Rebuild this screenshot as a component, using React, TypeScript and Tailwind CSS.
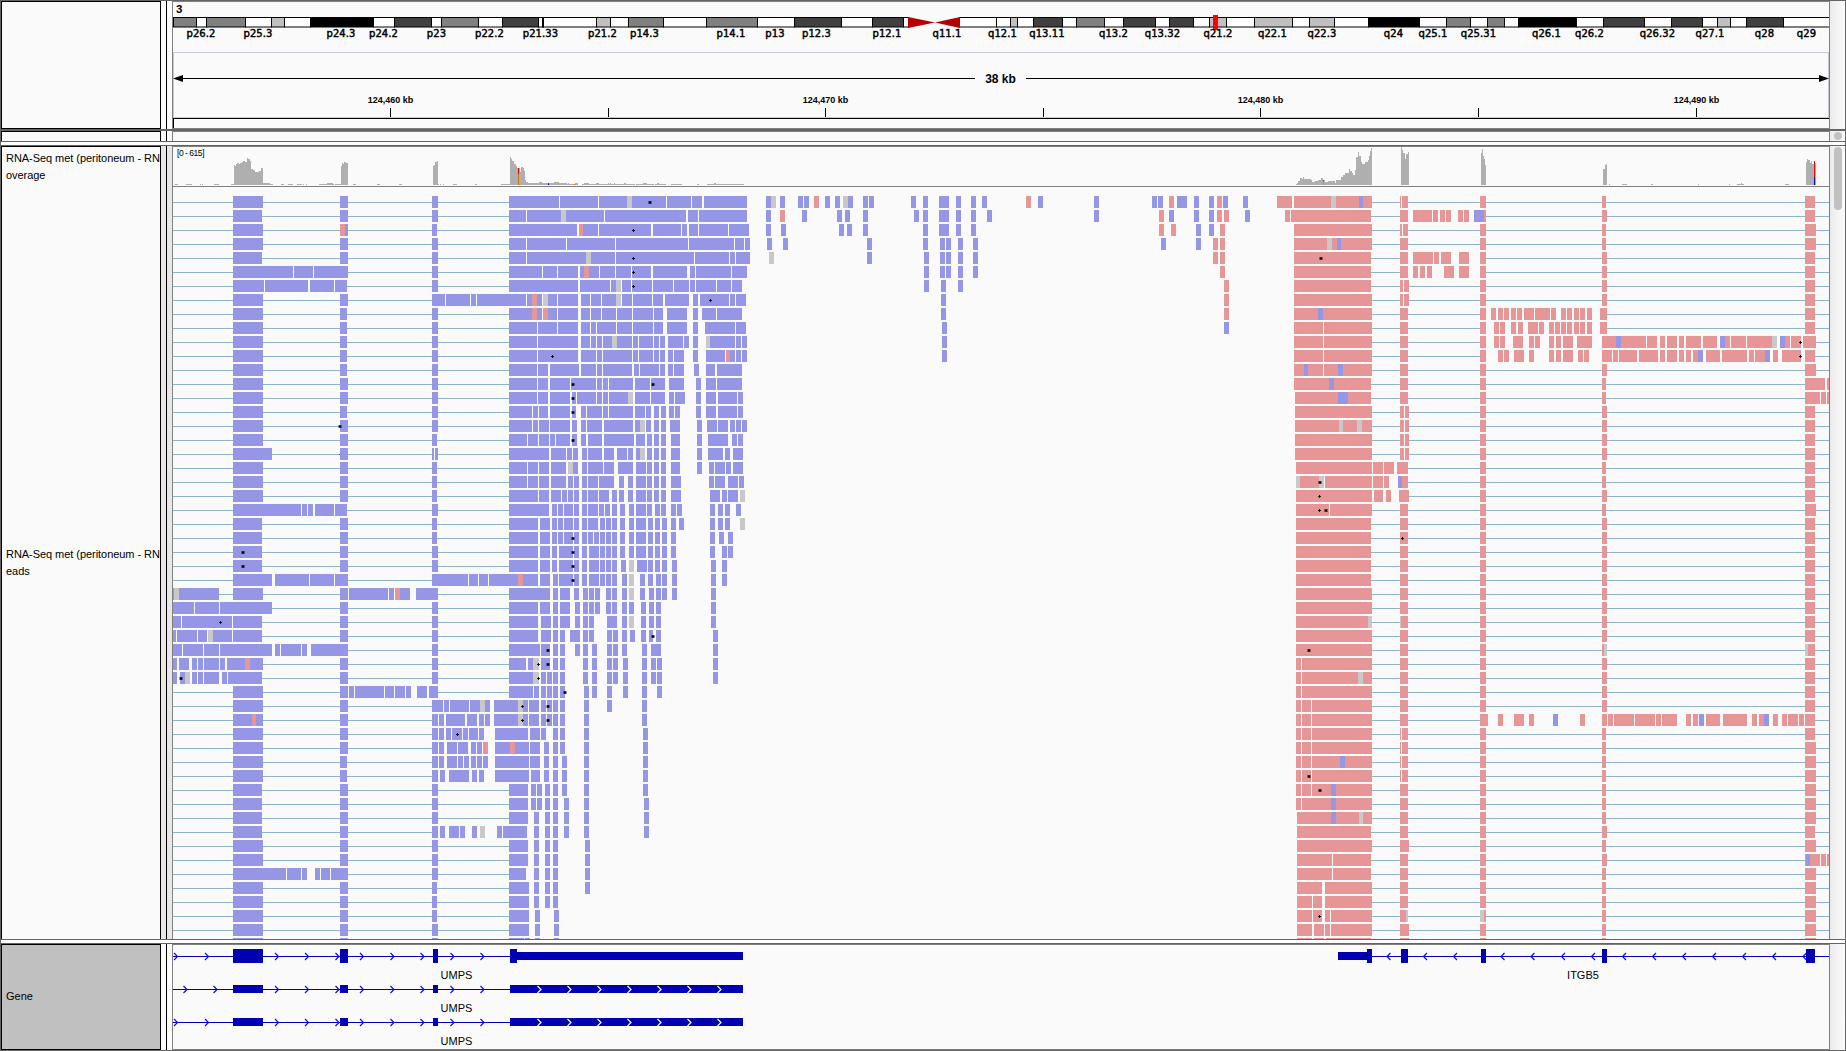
import React from "react";

const BLUE = "#9696e6";
const RED = "#e69696";
const GREY = "#c8c8c8";
const NAVY = "#0000b2";
const SANS = '"Liberation Sans", Arial, sans-serif';

/* ---------- Ideogram ---------- */

const W = "#ffffff";
const L = "#c0c0c0";
const M = "#808080";
const D = "#404040";
const K = "#000000";

const bands: [number, string][] = [
  [173, M], [196, W], [206, M], [245, W], [271, L], [284, W], [310, K], [373, W], [394, D], [431, W],
  [441, M], [478, W], [502, D], [538, W], [542, K], [543, W], [596, L], [610, W], [628, M], [663, W],
  [706, M], [757, W], [794, D], [841, W], [872, D], [903, W], [908, "none"], [959, W], [996, W],
  [1010, L], [1017, W], [1033, D], [1062, W], [1076, M], [1104, W], [1123, D], [1155, W], [1169, D],
  [1193, W], [1209, L], [1226, W], [1254, L], [1292, W], [1309, L], [1334, W], [1368, K], [1419, W],
  [1446, M], [1470, W], [1487, M], [1504, W], [1518, K], [1576, W], [1603, D], [1644, W], [1671, D],
  [1702, W], [1717, L], [1730, W], [1746, D], [1783, W], [1830, "none"],
];

const bandLabels: [string, number][] = [
  ["p26.2", 201], ["p25.3", 258], ["p24.3", 341], ["p24.2", 383.5], ["p23", 436.5], ["p22.2", 489.5],
  ["p21.33", 540.5], ["p21.2", 602.5], ["p14.3", 644.5], ["p14.1", 731], ["p13", 775], ["p12.3", 816.5],
  ["p12.1", 887], ["q11.1", 947], ["q12.1", 1002.5], ["q13.11", 1047], ["q13.2", 1113.5],
  ["q13.32", 1162.5], ["q21.2", 1218], ["q22.1", 1272.5], ["q22.3", 1322], ["q24", 1393.5],
  ["q25.1", 1433], ["q25.31", 1478.5], ["q26.1", 1546.5], ["q26.2", 1589.5], ["q26.32", 1657.5],
  ["q27.1", 1710], ["q28", 1764.5], ["q29", 1806.5],
];

function Ideogram() {
  return (
    <svg width={1656} height={50} viewBox="173 2 1656 50" className="block">
      <text x={176} y={13} fontFamily={SANS} fontSize={11.5} fontWeight={700}>3</text>
      {bands.slice(0, -1).map(([x, c], i) =>
        c === "none" ? null : (
          <rect key={x} x={x + 0.5} y={17.5} width={bands[i + 1][0] - x} height={9.5} fill={c} stroke="#000" />
        ),
      )}
      <path d="M908 17 L935 22.5 L908 28Z M960 17 L935 22.5 L960 28Z" fill="#b40000" />
      <rect x={1213} y={15} width={5} height={15} fill="#ff0000" />
      {bandLabels.map(([t, x]) => (
        <text key={t} x={x} y={36.5} textAnchor="middle" fontFamily='"DejaVu Sans", Verdana, sans-serif' fontSize={10} letterSpacing={0.1} stroke="#000" strokeWidth={0.45}>
          {t}
        </text>
      ))}
    </svg>
  );
}

/* ---------- Ruler ---------- */

const ticks: [number, string][] = [
  [390, "124,460 kb"], [608, ""], [825, "124,470 kb"], [1043, ""], [1260, "124,480 kb"], [1478, ""], [1696, "124,490 kb"],
];

function Ruler() {
  return (
    <svg width={1656} height={66} viewBox="173 52 1656 66" className="block">
      <path d="M173.5 118V52.5H1828.5V118M173 117.5H1829" fill="none" stroke="#c8c8d6" />
      <path d="M175 78.5H975M1026 78.5H1827" stroke="#000" />
      <path d="M173 78.5L183 75V82ZM1829 78.5L1819 75V82Z" />
      <text x={1000.5} y={83} textAnchor="middle" fontFamily={SANS} fontSize={12} fontWeight={700}>38 kb</text>
      {ticks.map(([x, t]) => (
        <g key={x}>
          <path d={`M${x + 0.5} 108V117`} stroke="#000" />
          <text x={x + 0.5} y={103} textAnchor="middle" fontFamily={SANS} fontSize={9} fontWeight={700}>{t}</text>
        </g>
      ))}
    </svg>
  );
}

/* ---------- Coverage ---------- */

interface Profile {
  origin: number;
  scale: number;
  steps: string;
}

/* Each entry is "start:top,start:top,...,end"; tops are in thirds of a pixel. */
const profiles: Profile[] = [
  {
    origin: 0,
    scale: 2.529,
    steps: `443:552,450 470:552,486 506:552,508 511:552,513 540:552,554 584:552,592
592:496,595:499,598:493,600:490,604:493,608:490,611:487,614:484,620:487,625:474,628:477,632:484,635:507,641:510,645:516,655:512,660:504,665:549,683:552,690
711:552,718 728:552,741 752:552,763 767:552,769 773:552,776 807:552,827:549,841:552,845 848:552,862
862:498,865:489,868:493,870:486,874:489,880 893:552,900 953:552,961 1009:552,1017
1095:498,1098:495,1101:486,1104:484,1108 1107:552,1110 1113:552,1115 1120:552,1123 1146:552,1156 1201:552,1206 1267:552,1290
1290:471,1292:477,1296:483,1300:492,1304:497,1308:503,1314:516,1318:501,1322:505,1325:513,1328:540,1331:545,1335:549,1362:546,1370:549,1390:552,1392:549,1401:546,1414:549,1428:552,1430:549,1433:552,1436:549,1439:552,1446:552,1455:549,1461:552,1463
1472:552,1478:549,1490:552,1508:549,1514:552,1568`,
  },
  {
    origin: 600,
    scale: 2.529,
    steps: "0:552,20:549,23:552,26:549,28:552,36:549,39:552,46 48:552,61:549,66:552,89 91:552,109:549,119:552,137 139:552,144:549,149:552,167 180:552,207 245:552,250 271:552,288:549,293:552,364",
  },
  {
    origin: 1220,
    scale: 2.505,
    steps: `190:552,193:548,196:543,200:535,206:537,208:531,211:536,220:537,228:540,230:545,237:543,245:541,252:534,258:541,262:546,270:543,282:544,288:549,291:541,297:540,303:532,307:525,312:520,317:518,322:508,326:513,330:520,334:525,337:510,341:471,346:456,349:467,352:486,356:491,362:486,367:486,371:480,374:467,377:453,379:444,381
453:441,455:450,459:460,463:477,466:463,471:456,473 654:460,656:447,658:468,661:477,664:495,666 959:507,964:495,967:491,969
975:552,977 1007:552,1019 1080:552,1085 1197:552,1200 1275:552,1277 1295:552,1304:549,1308:552,1313 1415:552,1425
1468:487,1470:476,1474:479,1477:489,1481:484,1484:491,1487:484,1490:488,1493`,
  },
];

const areaPath = ({ origin, scale, steps }: Profile) =>
  steps
    .split(/\s+/)
    .map((run) => {
      const parts = run.split(",").map((p) => p.split(":").map(Number));
      const px = (v: number) => Math.round(origin + v / scale);
      let d = `M${px(parts[0][0])} 185`;
      for (let i = 0; i < parts.length - 1; i++) {
        d += `V${Math.round(parts[i][1] / 3)}H${px(parts[i + 1][0])}`;
      }
      return d + "V185Z";
    })
    .join("");

const variants: [number, number, number, string][] = [
  [518, 168, 6, "#ff0000"], [518, 174, 11, "#d17105"], [548, 183, 1, "#ff0000"], [548, 184, 1, "#0000ff"],
  [574, 184, 1, "#d17105"], [1323, 180, 1, "#ff0000"], [1323, 181, 4, "#00ff00"],
  [1814, 161, 16, "#ff0000"], [1814, 177, 8, "#0000ff"],
];

function Coverage() {
  return (
    <svg width={1656} height={40} viewBox="173 147 1656 40" className="block" shapeRendering="crispEdges">
      {profiles.map((p) => (
        <path key={p.origin} d={areaPath(p)} fill="#afafaf" />
      ))}
      {variants.map(([x, y, h, c], i) => (
        <rect key={i} x={x} y={y} width={1} height={h} fill={c} />
      ))}
      <rect x={173} y={186} width={1656} height={1} fill="#808080" />
      <text x={177} y={156} fontFamily={SANS} fontSize={8.5} textLength={27.5}>[0 - 615]</text>
    </svg>
  );
}

/* ---------- Reads ---------- */

/*
 * A row is a list of blocks "start-end" in region units, optionally prefixed by
 * b / r / g for a colour of its own. "*x" marks an insertion, "+x" a small one,
 * "~x" one that is mostly hidden behind the block beside it.
 */
const ex = (a: number, b: number, c: number) => `219-${a} 540-${b} 816-${c}`;
const rt = (c = 917, d = 1484, b = "354-376") => `${b} 572-588 904-${c} 1456-${d}`;
const split = "354-365 367-378";
const thin = "354-357 359-376";

const leftRows: string[] = [
  ex(309, 564, 834),
  ex(306, 564, 834),
  ex(309, 564, 831) + " r540-555",
  ex(309, 564, 834),
  ex(306, 564, 834),
  "219-399 402-459 462-564 816-834",
  "219-312 315-444 450-522 525-561 816-834",
  "219-309 540-564 816-855 858-930 933-948 951-1020",
  ex(309, 561, 834),
  ex(309, 561, 834),
  ex(309, 561, 834),
  ex(309, 561, 834),
  ex(309, 561, 834),
  ex(309, 564, 834),
  ex(309, 564, 834),
  ex(309, 561, 834),
  ex(309, 564, 834) + " *541",
  ex(309, 564, 831),
  "219-336 540-564 816-822 825-834 ~538",
  ex(309, 564, 831),
  ex(309, 564, 831),
  ex(309, 564, 831),
  "219-423 426-441 444-459 465-522 525-561 816-834",
  ex(306, 564, 831),
  ex(306, 564, 831),
  ex(306, 564, 834) + " *249",
  ex(306, 564, 834) + " *249",
  "219-336 345-447 450-522 525-564 816-924 927-954 957-984 987-1020",
  "39-177 g42-57 219-309 540-564 567-684 687-702 705-750 r705-720 768-834",
  "39-102 105-177 180-336 540-564 816-834",
  "39-63 66-216 219-306 540-564 816-834 +181",
  "39-48 51-111 114-141 g144-159 159-216 219-306 540-564 816-834",
  "39-66 69-129 132-177 180-336 345-360 363-423 426-441 453-564 816-834",
  "39-51 57-87 96-111 114-129 132-177 180-195 201-309 r255-270 540-564 816-834",
  "39-51 60-75 g75-90 96-111 114-129 132-177 186-201 204-306 540-564 816-834 *63",
  "219-309 540-564 567-582 585-672 675-702 705-735 738-753 771-801 807-834",
  "219-309 540-564 816-849 852-867 870-927 930-960 g960-975 975-990",
  "219-309 r276-288 540-564 816-834 837-852 858-915 921-951 957-972 975-990",
  "219-309 540-564 816-834 837-852 858-873 876-906 909-924 927-954 957-972 +892",
  "219-309 540-564 816-834 837-852 861-891 894-924 933-948 951-966 r969-984",
  "219-309 540-561 816-834 837-852 861-891 894-909 912-927 933-948 951-966 969-984",
  "219-309 540-561 816-834 840-855 867-927 936-951 957-972",
  ex(306, 564, 834),
  ex(306, 564, 834),
  ex(306, 564, 834),
  "219-306 540-564 816-834 840-855 867-897 900-915 936-951 g960-975",
  ex(309, 564, 834),
  ex(309, 564, 834),
  "219-378 381-423 426-441 465-480 483-510 513-564 816-834",
  ex(309, 564, 831),
  ex(309, 564, 831),
  ex(309, 564, 831),
  ex(309, 564, 834),
  ex(309, 564, 834),
];

const pileRows: string[] = [
  "57-207 210-324 327-528 g411-426 531-603 606-636 642-771 *479",
  "57-108 111-342 g213-228 345-588 594-624 627-771",
  "57-261 267-324 r267-279 327-483 489-573 576-591 597-624 627-714 717-777 +430",
  "57-108 111-228 231-375 378-594 597-732 735-762 765-780",
  "57-108 111-375 g288-303 378-612 615-717 720-735 738-780 +430",
  "57-156 159-201 204-264 270-327 r282-297 330-375 378-423 426-483 489-591 600-615 618-723 726-771 +430",
  "57-264 270-360 363-393 g378-393 396-423 426-486 489-549 552-597 600-615 618-678 681-723 726-756 +430",
  "0-108 111-126 r126-141 141-156 g159-174 174-201 204-264 273-300 303-333 336-393 g378-393 396-426 429-486 489-519 525-597 609-624 630-717 720-735 738-768 +661",
  "57-126 r126-141 141-156 r159-174 174-201 204-264 273-300 303-333 336-378 381-426 429-489 492-519 531-591 609-624 636-678 681-756",
  "57-141 144-201 204-264 273-300 303-318 321-378 381-426 429-489 492-519 531-591 609-624 645-735 738-768",
  "57-141 144-264 273-300 303-318 321-336 339-426 g366-381 429-444 447-489 492-507 510-525 534-579 582-597 609-624 g648-660 660-735 738-753 756-771",
  "57-141 144-264 273-318 321-336 339-426 429-444 447-489 492-507 510-525 534-549 552-582 609-624 648-705 r708-720 720-735 738-753 756-771 +187",
  "57-141 144-174 180-267 273-318 321-336 339-426 432-447 450-507 510-525 534-549 552-582 612-627 648-675 681-756",
  "57-141 144-174 180-240 243-318 321-336 339-354 357-429 435-480 483-525 537-582 618-633 648-678 681-756 *249 *489",
  "57-141 144-174 180-240 246-258 261-318 321-336 339-354 357-414 g414-429 435-480 483-525 537-552 555-585 618-633 648-678 684-741 744-759 *249",
  "57-126 129-144 147-174 180-240 246-258 273-288 291-336 339-354 357-429 435-465 468-483 492-507 513-528 537-552 555-570 618-633 648-678 684-741 744-759 *249",
  "57-126 129-144 147-177 180-240 246-261 273-288 291-336 342-429 435-450 g450-465 468-483 492-507 513-528 540-570 621-636 651-681 684-714 720-735 738-753 756-771",
  "57-111 114-144 147-177 180-195 198-240 246-261 273-288 294-336 342-432 438-465 471-486 492-507 513-528 543-570 621-636 654-714 726-741 744-759 *249",
  "57-177 183-228 231-246 249-264 276-291 294-336 342-372 381-411 414-429 438-450 g450-465 471-486 492-507 513-528 543-570 621-636 654-699 705-720 729-759",
  "57-111 114-144 147-177 183-228 g234-249 249-264 276-291 294-339 342-372 384-429 438-468 471-486 492-507 513-528 543-570 621-636 657-672 675-705 708-723 729-759",
  "57-111 114-144 147-177 183-228 234-249 252-267 276-291 294-324 327-372 387-402 414-429 438-468 471-486 492-507 513-528 543-573 657-672 675-705 714-744 747-762",
  "57-144 147-177 183-213 216-231 234-249 252-267 276-291 294-324 327-357 366-381 387-402 414-429 438-468 471-486 492-507 513-528 543-573 660-690 696-711 714-744 g750-765",
  "57-177 186-201 204-219 222-249 252-267 276-291 294-324 327-342 345-360 366-381 390-405 417-432 438-468 471-486 495-510 513-528 543-558 561-576 660-675 684-699 705-720 738-753",
  "57-144 150-180 186-201 204-219 222-249 252-267 276-291 294-324 330-345 348-363 366-381 390-405 417-432 438-468 474-489 495-510 516-531 543-558 567-582 660-675 684-699 705-720 g750-765",
  "57-144 150-180 186-201 204-219 222-249 252-267 276-291 294-309 312-327 330-345 348-363 366-381 390-405 417-432 438-468 474-489 495-510 516-531 543-558 660-675 687-702 714-729 *248",
  "57-144 150-180 186-201 207-249 252-267 276-291 297-327 330-345 348-363 366-381 390-405 417-432 438-468 474-489 495-510 516-531 543-558 660-675 696-711 714-729 *248",
  "57-144 150-180 186-201 207-249 252-267 276-291 297-327 330-345 348-363 366-381 393-408 g417-432 441-471 474-489 495-510 516-531 546-561 663-678 696-711 *248",
  "0-144 r84-99 150-180 189-204 207-249 252-267 276-291 297-327 330-345 348-363 366-381 396-411 g417-432 450-465 474-489 498-513 516-531 546-561 663-678 696-711 *248",
  "57-180 189-204 210-240 252-267 279-294 297-312 315-330 348-363 366-381 396-411 g417-432 450-465 477-492 498-513 516-531 546-561 663-678",
  "57-144 150-180 189-204 210-240 255-270 279-294 297-312 315-330 348-363 366-381 396-411 417-432 453-468 477-492 498-513 663-678",
  "57-144 153-183 189-204 210-240 255-270 279-294 297-312 351-381 396-411 g417-432 453-468 477-492 498-513 663-678",
  "57-144 153-183 189-204 210-225 240-270 279-294 297-312 351-366 369-384 396-411 420-435 453-468 477-489 498-513 669-684 *489",
  "57-150 153-180 189-204 210-225 255-270 279-294 306-321 351-366 369-384 396-411 456-471 483-513 669-684 *174",
  "57-108 114-129 g129-147 153-180 189-204 210-225 279-294 306-321 351-366 369-384 399-414 456-471 483-498 501-516 669-684 +145 *174",
  "57-129 g129-147 153-168 171-186 189-204 210-225 279-294 306-321 351-366 369-384 399-414 456-471 483-498 501-516 669-684 +145",
  "57-129 132-147 153-168 171-186 189-204 210-225 282-297 306-321 351-366 399-414 456-471 501-516 *225",
  "12-114 g84-99 117-147 153-168 171-186 189-204 210-225 282-297 351-366 456-471 +97 *174",
  "12-114 g84-99 117-147 153-168 171-186 189-204 210-225 282-297 456-471 +97 *174",
  "15-114 120-150 153-168 189-204 210-225 282-297 459-474",
  "15-117 r60-75 120-150 162-177 189-204 210-225 282-297 459-474",
  "15-117 120-150 162-177 189-204 216-231 282-297 459-474",
  "15-117 123-150 162-177 189-204 216-231 282-297 459-474",
  "57-114 123-138 141-156 165-180 189-204 216-231 282-297 459-474",
  "57-114 123-138 141-156 165-180 189-204 222-237 282-297 462-477",
  "57-114 132-147 165-180 189-204 222-237 282-297 462-477",
  "21-36 39-111 132-147 165-180 189-204 222-237 282-297 462-477",
  "57-114 132-147 165-180 189-204 285-300",
  "57-114 132-147 165-180 189-204 285-300",
  "57-108 132-147 165-180 189-204 285-300",
  "57-117 132-147 165-180 189-204 285-300",
  "57-117 132-147 165-180 189-204",
  "57-117 135-150 192-207",
  "57-117 135-150 192-207",
  "57-102 105-120 135-150 192-207",
];

const middleRows: string[] = [
  "47-62 g62-77 89-104 142-157 160-175 r189-204 222-237 251-266 g275-290 290-305 334-349 352-367 476-491 512-527 559-589 609-624 654-669 686-701 r817-831 852-867 1018-1033 1189-1204 1207-1222 r1240-1254 1263-1293 1314-1328 1358-1373 r1382-1396 1399-1414 1459-1473",
  "47-62 r89-104 154-169 257-272 281-296 334-349 485-500 512-527 559-589 609-624 654-669 701-716 1018-1033 r1210-1225 1240-1254 1314-1328 1358-1373 r1382-1396 r1402-1417 1464-1479",
  "47-62 92-107 263-278 287-302 334-349 512-527 559-589 609-624 654-669 r1210-1225 r1246-1260 1319-1334 1358-1373 r1390-1405",
  "50-65 98-112 346-361 512-527 562-577 580-595 615-630 660-675 1216-1231 1319-1334 r1370-1385 r1390-1405",
  "g56-71 346-361 515-530 562-577 580-595 615-630 660-675 r1370-1385 r1390-1405",
  "515-530 562-577 580-595 615-630 660-675 r1390-1405",
  "515-530 565-580 615-630 r1402-1417",
  "565-580 r1402-1417",
  "565-580 r1402-1417",
  "568-583 1402-1417",
  "568-583",
  "568-583",
];

const rightRows: string[] = [
  "19-60 65-278 g166-180 b242-253 " + rt(915, 1484, thin),
  "41-54 57-275 354-376 389-441 444-457 463-476 479-493 512-525 528-542 b555-583 583-588 904-917 1456-1484",
  "65-278 " + rt(915, 1486, "354-359 362-376"),
  "65-278 g155-169 b182-193 " + rt(915, 1486),
  "65-275 354-376 389-444 446-460 465-493 514-542 572-588 904-917 1456-1484 *138",
  "65-275 354-376 389-403 408-422 427-441 474-501 514-542 572-588 904-917 1456-1484",
  "65-275 " + rt(917, 1484, "354-362 365-378"),
  "65-278 " + rt(917, 1484, "354-362 365-378"),
  "65-278 b131-144 354-376 572-588 602-615 621-634 637-651 656-670 672-686 691-719 721-762 765-779 792-806 808-822 828-841 844-857 863-877 898-917 1456-1484",
  "65-144 147-278 354-376 572-588 610-623 626-640 656-670 675-689 702-730 732-746 759-773 776-789 792-806 808-822 828-841 844-857 863-877 898-917 1456-1484",
  "65-144 147-278 354-376 572-588 610-623 626-640 661-689 705-719 721-735 759-773 779-792 798-825 836-877 904-1024 b942-955 1026-1053 1062-1075 1081-1108 1113-1127 1132-1173 1179-1217 b1225-1239 1239-1252 1255-1296 1298-1380 g1367-1380 b1388-1402 1402-1416 1418-1445 1451-1486 +1444",
  "65-144 147-278 354-376 572-588 621-634 637-651 664-691 705-719 759-773 779-792 798-825 838-852 855-868 904-931 934-947 950-999 1004-1056 1062-1075 1081-1108 1113-1127 1132-1146 1151-1165 b1165-1179 1187-1225 1230-1298 1304-1318 1320-1347 b1347-1361 1369-1383 1394-1445 1456-1484 +1444",
  "65-144 147-278 b93-103 b185-199 " + rt(917, 1486),
  "65-275 b161-174 354-376 572-588 904-915 1456-1511 1516-1523",
  "68-275 b185-212 354-376 572-588 904-915 1456-1497 1500-1514 1516-1523",
  "68-278 " + rt(917, 1484, split),
  "68-278 g188-199 g237-250 " + rt(917, 1484, split),
  "68-278 " + rt(917, 1484, split),
  "68-278 " + rt(917, 1484, split),
  "71-278 280-308 310-338 346-376 572-588 904-915 1456-1484",
  "71-147 g71-82 g133-147 150-278 280-308 310-324 b348-359 359-376 572-588 904-915 1456-1484 *136",
  "71-278 283-308 316-329 351-378 572-588 904-917 1456-1484 +134",
  "71-161 163-278 " + rt(915, 1486) + " +134 *152",
  "71-275 " + rt(),
  "71-275 " + rt() + " +361",
  "71-275 " + rt(),
  "71-275 " + rt(),
  "71-275 " + rt(),
  "71-278 " + rt(),
  "71-278 " + rt(),
  "71-278 g267-278 " + rt() + " g354-357",
  "71-278 " + rt(),
  "71-278 " + rt() + " g909-917 g1456-1465 *106",
  "71-84 87-278 " + rt(),
  "71-84 87-278 g240-253 " + rt(),
  "71-84 87-278 " + rt(),
  "71-84 87-112 114-278 " + rt(),
  "71-84 87-112 114-278 354-376 572-593 621-634 664-691 705-719 b770-784 844-857 904-917 920-934 936-991 994-1048 1051-1064 1067-1108 1132-1146 1151-1165 b1168-1181 1187-1225 1233-1298 1312-1326 1331-1345 b1345-1358 1369-1383 1394-1407 1410-1437 1440-1454 1456-1484",
  "71-84 87-112 114-278 " + rt(915, 1484, thin),
  "71-84 87-112 114-278 " + rt(915, 1486, thin),
  "71-84 87-112 114-278 b191-204 " + rt(915, 1486, thin),
  "71-84 87-112 114-278 " + rt(915, 1486, thin) + " *106",
  "71-84 87-112 114-278 b166-180 " + rt(915, 1486) + " *135",
  "71-84 87-278 b166-180 " + rt(915, 1486),
  "73-278 b166-180 g242-253 " + rt(915, 1486),
  "73-275 " + rt(),
  "73-278 " + rt(915, 1486, "354-378"),
  "73-169 171-275 354-376 572-588 904-917 1456-1497 b1459-1470 1500-1514 1516-1523",
  "73-169 171-275 " + rt(915, 1486),
  "73-142 150-278 " + rt(915, 1486),
  "73-114 117-142 150-278 " + rt(915, 1486),
  "73-114 117-142 150-163 166-278 " + rt(915, 1486) + " g370-376 g572-583 +135",
  "73-114 120-147 150-163 166-278 " + rt(915, 1486, "354-378"),
  "73-114 120-147 152-275 " + rt(915, 1486, "354-378"),
];

interface Region {
  origin: number;
  scale: number;
  fill: string;
  rows: string[];
  minGap?: number;
  from?: number;
  to?: number;
  tailBefore?: number;
}

const regions: Region[] = [
  { origin: 160, scale: 3, fill: BLUE, rows: leftRows, minGap: 40, from: 39, to: 1047, tailBefore: 840 },
  { origin: 490, scale: 3, fill: BLUE, rows: pileRows },
  { origin: 750, scale: 2.9585, fill: BLUE, rows: middleRows },
  { origin: 1270, scale: 2.7222, fill: RED, rows: rightRows, minGap: 70, to: 1523, tailBefore: 1490 },
];

const tint: Record<string, string> = { b: BLUE, r: RED, g: GREY };

function Mark({ x, y, kind }: { x: number; y: number; kind: string }) {
  if (kind === "~") {
    return <rect x={Math.round(x - 0.5)} y={y + 6} width={1} height={1} fill="#000" opacity={0.5} />;
  }
  if (kind === "+") {
    return (
      <g>
        <rect x={Math.round(x - 1.5)} y={y + 6} width={3} height={1} fill="#000" opacity={0.85} />
        <rect x={Math.round(x - 0.5)} y={y + 5} width={1} height={3} fill="#000" opacity={0.85} />
      </g>
    );
  }
  return (
    <g>
      <rect x={Math.round(x - 2)} y={y + 5} width={4} height={3} fill="#000" opacity={0.4} />
      <rect x={Math.round(x - 1)} y={y + 5} width={2} height={3} fill="#000" opacity={0.6} />
      <rect x={Math.round(x - 1)} y={y + 6} width={2} height={1} fill="#000" />
    </g>
  );
}

function ReadRow({ region, row, index }: { region: Region; row: string; index: number }) {
  const y = 196 + index * 14;
  const px = (v: number) => Math.round(region.origin + v / region.scale);
  const blocks: [number, number, string][] = [];
  const marks: [number, string][] = [];
  row.split(" ").forEach((tok) => {
    const head = tok[0];
    if (head === "*" || head === "+" || head === "~") {
      marks.push([region.origin + Number(tok.slice(1)) / region.scale, head]);
      return;
    }
    const own = tint[head];
    const [a, b] = (own ? tok.slice(1) : tok).split("-").map(Number);
    blocks.push([a, b, own ?? region.fill]);
  });

  const links: [number, number][] = [];
  if (region.minGap) {
    let end = region.from ?? Infinity;
    [...blocks].sort((p, q) => p[0] - q[0]).forEach(([a, b]) => {
      if (a - end >= region.minGap!) links.push([end, a]);
      end = end === Infinity ? b : Math.max(end, b);
    });
    if (end < region.tailBefore!) links.push([end, region.to!]);
  }

  return (
    <g>
      {links.map(([a, b]) => (
        <rect key={`l${a}`} x={px(a)} y={y + 6} width={px(b) - px(a)} height={1} fill="#91b5c8" />
      ))}
      {blocks.map(([a, b, c], i) => (
        <rect key={i} x={px(a)} y={y} width={Math.max(1, px(b) - px(a))} height={12} fill={c} />
      ))}
      {marks.map(([x, kind], i) => (
        <Mark key={`m${i}`} x={x} y={y} kind={kind} />
      ))}
    </g>
  );
}

function Reads() {
  return (
    <svg width={1656} height={752} viewBox="173 187 1656 752" className="block" shapeRendering="crispEdges">
      {regions.map((region) => (
        <g key={region.origin}>
          {region.rows.map((row, i) => (
            <ReadRow key={i} region={region} row={row} index={i} />
          ))}
        </g>
      ))}
    </svg>
  );
}

/* ---------- Genes ---------- */

const chevrons = (tips: number[], y: number, dir: 1 | -1) =>
  tips.map((x) => `M${x - 3.5 * dir} ${y - 3.5}L${x} ${y}L${x - 3.5 * dir} ${y + 3.5}`).join("");

const sharedTips = [278.5, 308.5, 339, 363.5, 394, 424, 454, 484];
const utrTips = [541, 571, 601, 631, 661, 691, 721];
const itgb5Tips = [1387, 1423.5, 1453.5, 1501, 1531, 1561.5, 1591.5, 1622.5, 1652.5, 1682.5, 1712.5, 1742.5, 1772.5, 1803];

const transcripts: { y: number; tips: number[]; coding: boolean }[] = [
  { y: 956, tips: [177.5, 208.5, ...sharedTips], coding: true },
  { y: 989, tips: [187, 217, ...sharedTips], coding: false },
  { y: 1022, tips: [177.5, 208.5, ...sharedTips], coding: false },
];

function Genes() {
  return (
    <svg width={1656} height={104} viewBox="173 945 1656 104" className="block">
      {transcripts.map(({ y, tips, coding }) => {
        const top = coding ? y - 7 : y - 4;
        const h = coding ? 14 : 8;
        return (
          <g key={y} fill={NAVY}>
            <rect x={173} y={y} width={337} height={1} />
            <path d={chevrons(tips, y + 0.5, 1)} fill="none" stroke="#0a0af5" strokeWidth={1.2} />
            <rect x={233} y={top} width={30} height={h} />
            <rect x={340} y={top} width={8} height={h} />
            <rect x={433} y={top} width={5} height={h} />
            {coding && <rect x={510} y={top} width={7} height={h} />}
            <rect x={510} y={y - 4} width={233} height={8} />
            {!coding && <path d={chevrons(utrTips, y + 0.5, 1)} fill="none" stroke="#fff" strokeWidth={1.2} />}
            <text x={456.5} y={y + 23} textAnchor="middle" fill="#000" fontFamily={SANS} fontSize={11}>UMPS</text>
          </g>
        );
      })}
      <g fill={NAVY}>
        <rect x={1372} y={956} width={457} height={1} />
        <path d={chevrons(itgb5Tips, 956.5, -1)} fill="none" stroke="#0a0af5" strokeWidth={1.2} />
        <rect x={1338} y={952} width={30} height={8} />
        <rect x={1367} y={949} width={5} height={14} />
        <rect x={1401} y={949} width={7} height={14} />
        <rect x={1481} y={949} width={5} height={14} />
        <rect x={1602} y={949} width={5} height={14} />
        <rect x={1806} y={949} width={9} height={14} />
        <text x={1583} y={979} textAnchor="middle" fill="#000" fontFamily={SANS} fontSize={11}>ITGB5</text>
      </g>
    </svg>
  );
}

/* ---------- Frame ---------- */

function Gutter({ shaded = false }: { shaded?: boolean }) {
  return (
    <div className={shaded ? "flex w-[11px] shrink-0 justify-center bg-[#e8e6e6]" : "flex w-[11px] shrink-0 justify-center bg-[#fcfcfc]"}>
      <div className="w-px bg-black" />
    </div>
  );
}

function ScrollLane({ thumb }: { thumb?: string }) {
  return (
    <div className="w-[15px] shrink-0 bg-linear-to-r from-[#ebebeb] to-[#fcfcfc] pl-1">
      {thumb && <div className={thumb} />}
    </div>
  );
}

const Divider = () => <div className="h-[5px] shrink-0 border-y border-[#646464] bg-[#fdfdfd]" />;

function TrackName({ tail }: { tail: string }) {
  return (
    <div className="overflow-hidden whitespace-nowrap pl-1 text-[11px] leading-[17px] tracking-[-0.05px]">
      <div>RNA-Seq met (peritoneum - RN</div>
      <div>{tail}</div>
    </div>
  );
}

export default function App() {
  return (
    <div className="flex h-[1051px] w-[1846px] flex-col overflow-hidden border border-[#646464] bg-[#fafafa] font-['Liberation_Sans',Arial,sans-serif] text-black">
      <div className="flex h-[128px] shrink-0">
        <div className="w-[160px] shrink-0 border border-black" />
        <Gutter />
        <div className="flex w-[1658px] shrink-0 flex-col border border-[#808080]">
          <Ideogram />
          <Ruler />
          <div className="flex-1 border-l border-t border-black" />
        </div>
        <ScrollLane />
      </div>

      <div className="h-0.5 shrink-0 bg-[#646464]" />

      <div className="flex h-[10px] shrink-0">
        <div className="w-[160px] shrink-0 border border-b-0 border-black" />
        <Gutter />
        <div className="w-[1658px] shrink-0 border border-b-0 border-[#808080]" />
        <ScrollLane thumb="mt-px h-2 w-2 rounded-full bg-[#c1c1c1]" />
      </div>

      <Divider />

      <div className="flex h-[793px] shrink-0">
        <div className="flex w-[160px] shrink-0 flex-col border border-b-0 border-black">
          <div className="h-[40px] shrink-0 pt-[3px]">
            <TrackName tail="overage" />
          </div>
          <div className="flex flex-1 items-center">
            <TrackName tail="eads" />
          </div>
        </div>
        <Gutter shaded />
        <div className="w-[1658px] shrink-0 overflow-hidden border border-b-0 border-[#808080]">
          <Coverage />
          <Reads />
        </div>
        <ScrollLane thumb="mt-px h-[63px] w-2 rounded-full bg-[#c1c1c1]" />
      </div>

      <Divider />

      <div className="flex h-[106px] shrink-0">
        <div className="flex w-[160px] shrink-0 items-center border border-black bg-[#c0c0c0] pb-0.5 pl-1 text-[11px]">Gene</div>
        <Gutter />
        <div className="w-[1658px] shrink-0 border border-[#808080]">
          <Genes />
        </div>
        <ScrollLane />
      </div>
    </div>
  );
}
